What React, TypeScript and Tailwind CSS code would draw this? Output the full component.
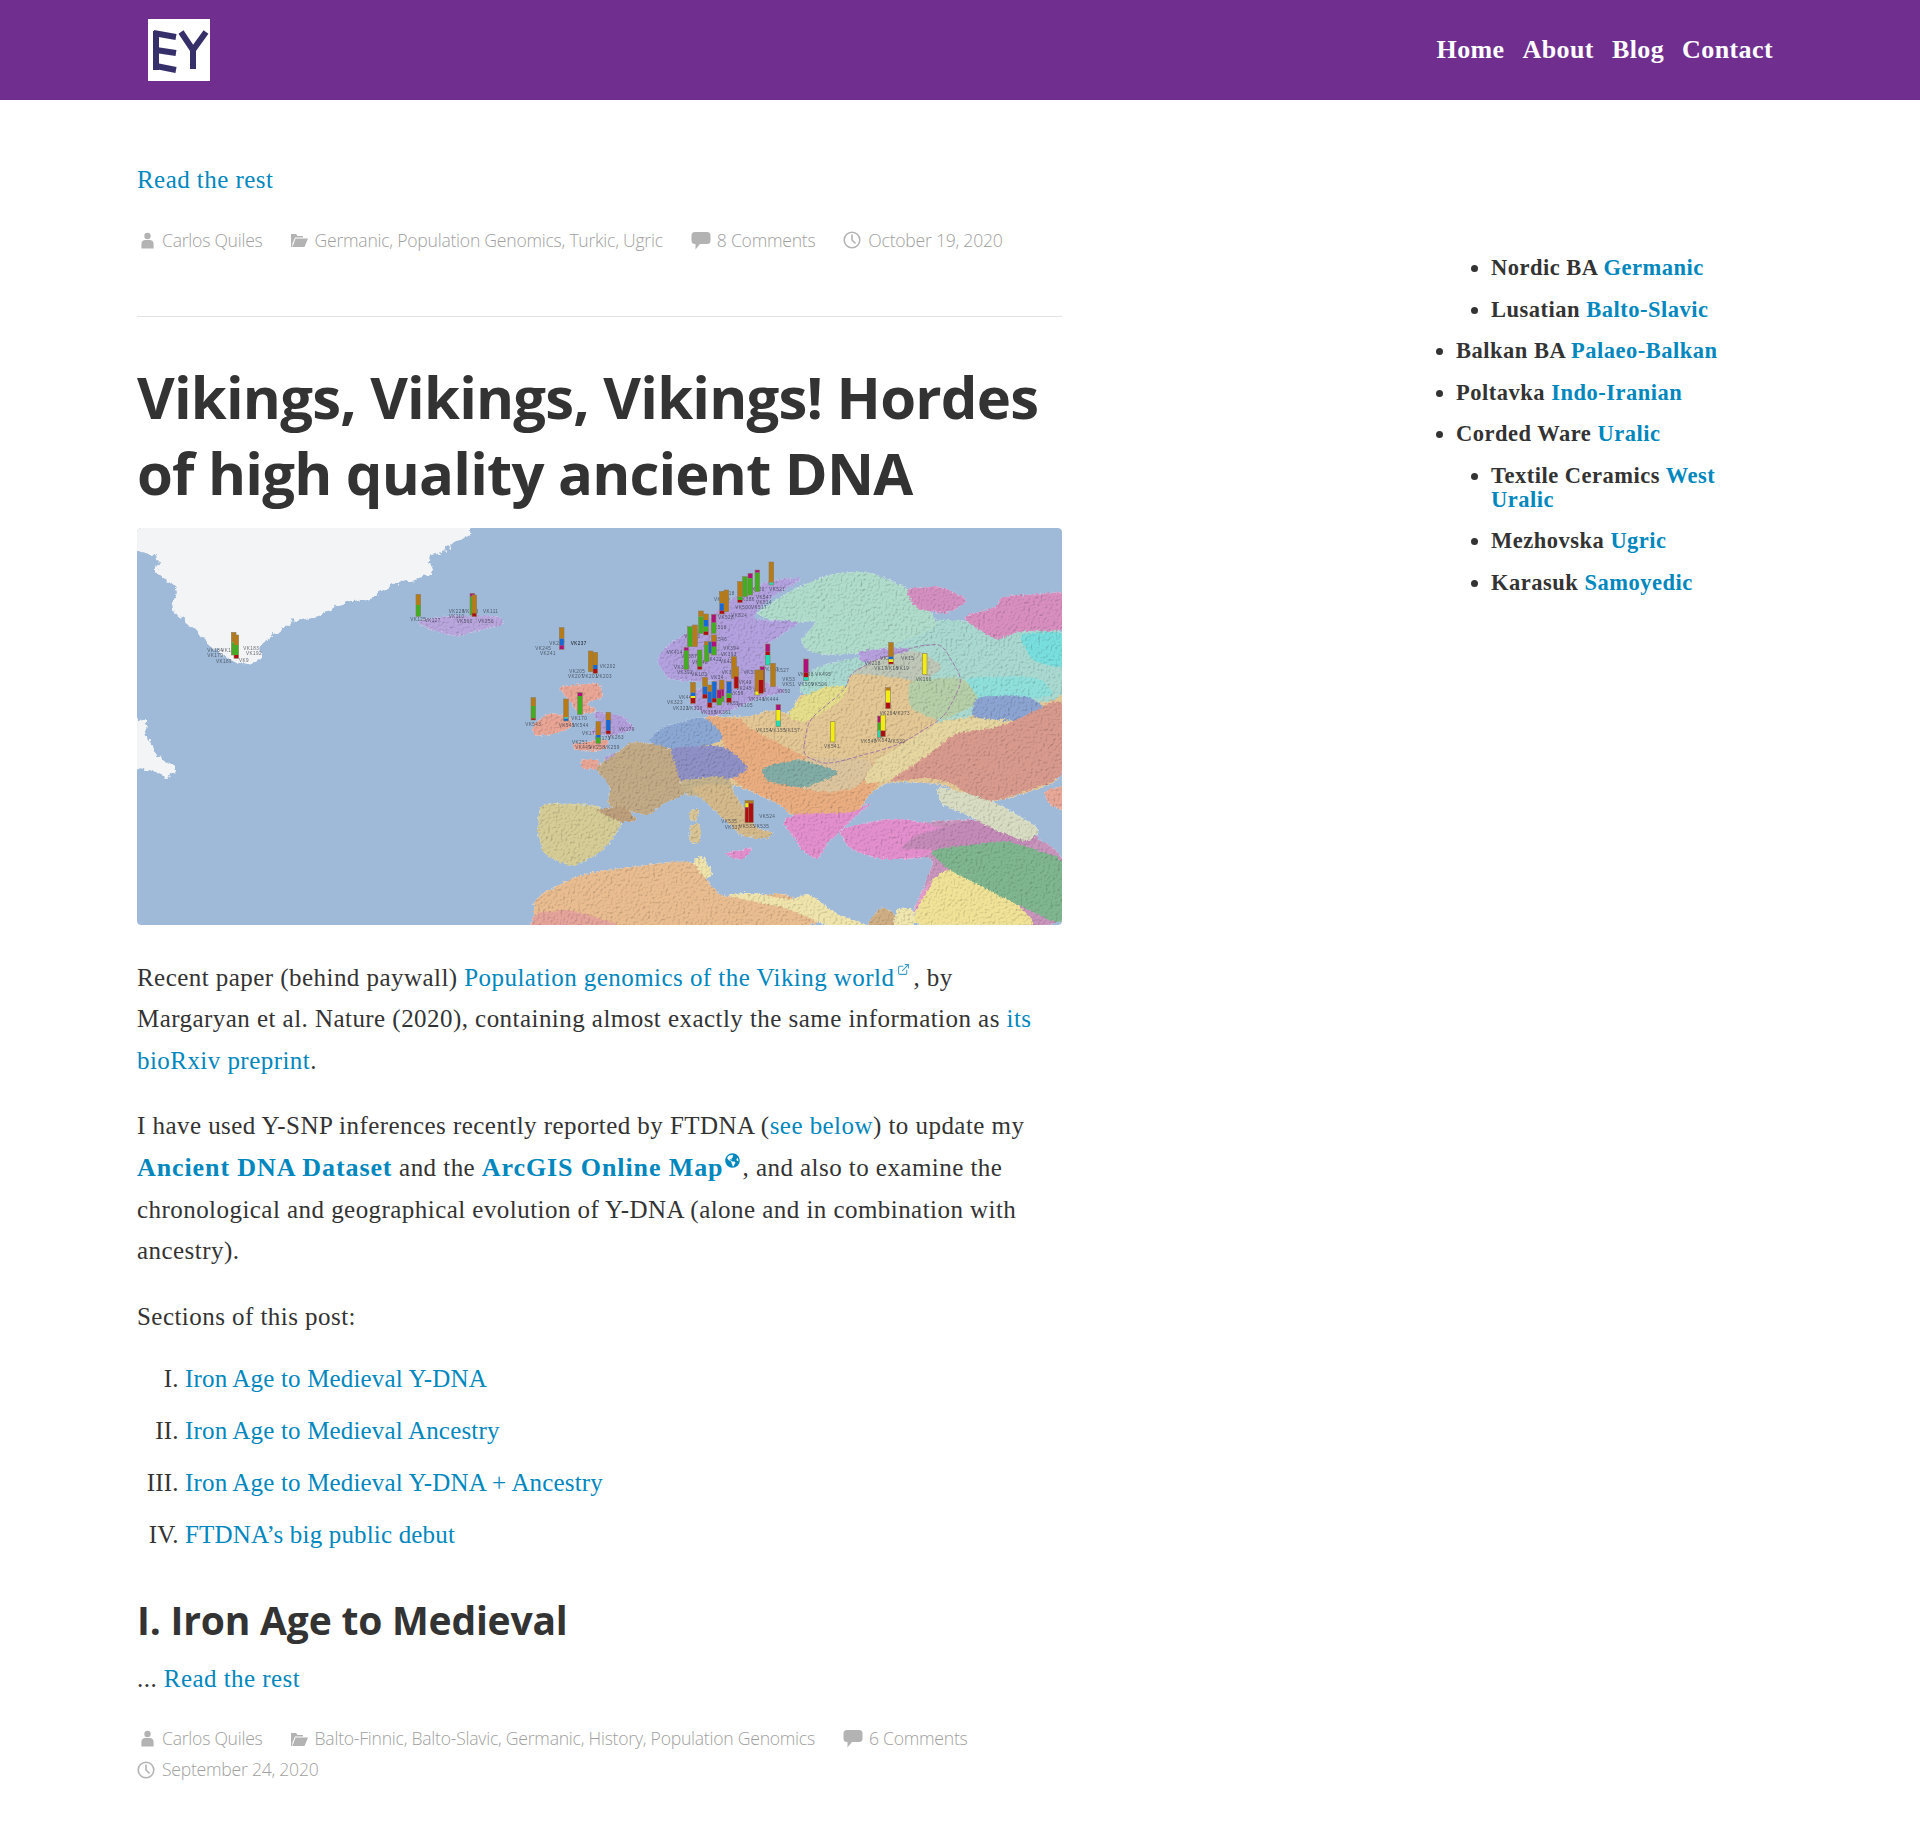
import { FaGlobeAmericas } from "react-icons/fa";
import { ExternalLink } from "lucide-react";
import type { ReactNode } from "react";

// map data: points are read off a 1526x1191 grid laid over the picture
const toPoints = (s: string): number[][] =>
  s.split(" ").map((q) => {
    const [x, y] = q.split(",").map(Number);
    return [(x - 12) / 1.65, (y - 24) / 3];
  });

// closed shape with its corners rounded off
const smooth = (s: string): string => {
  const p = toPoints(s);
  const lerp = (a: number[], b: number[], t: number) =>
    `${(a[0] + (b[0] - a[0]) * t).toFixed(1)} ${(a[1] + (b[1] - a[1]) * t).toFixed(1)}`;
  let d = "";
  p.forEach((c, i) => {
    const prev = p[(i + p.length - 1) % p.length];
    const next = p[(i + 1) % p.length];
    d += `${i === 0 ? "M" : "L"}${lerp(c, prev, 0.28)}Q${c[0].toFixed(1)} ${c[1].toFixed(1)} ${lerp(c, next, 0.28)}`;
  });
  return d + "Z";
};

const ice: string[] = [
  "-60,-60 560,-60 565,48 530,70 520,95 490,110 505,165 470,175 440,190 400,230 350,250 310,290 270,300 240,340 215,380 218,415 195,440 175,425 150,400 130,380 110,330 70,270 80,200 40,150 50,110 -60,60",
  "-40,585 30,598 25,650 45,700 75,745 65,778 30,748 -40,748",
  "520,308 565,298 595,308 560,328 525,328",
];

const regions: [string, string][] = [
  ["#b9a6dd", "470,305 520,288 612,288 618,312 575,332 540,350 500,332"],
  ["#e9a596", "662,620 690,578 725,588 732,620 700,642 668,648"],
  ["#e9a596", "705,500 775,488 782,530 752,552 772,574 740,584 725,540"],
  ["#e9a596", "730,672 792,656 785,692 732,690"],
  ["#e9a596", "742,720 772,716 778,748 748,748"],
  ["#b39fdc", "762,572 812,586 836,626 800,648 756,642 775,610"],
  ["#b39fdc", "782,708 832,688 832,728 788,736"],
  ["#e3c795", "945,590 1000,590 1100,590 1100,530 1180,470 1300,400 1545,330 1545,780 1440,840 1400,850 1340,790 1250,785 1215,830 1195,890 1100,895 1070,850 1000,795 960,790 905,790 850,670"],
  ["#c995bd", "1170,930 1420,890 1545,1000 1545,1225 1290,1225 1310,1100 1330,1010 1190,990"],
  ["#a9d9d0", "1100,520 1130,440 1230,400 1300,340 1320,300 1380,300 1420,350 1480,330 1545,330 1545,540 1420,560 1350,620 1200,560"],
  ["#b0dccb", "1030,285 1070,235 1100,205 1160,160 1220,155 1280,200 1310,240 1335,320 1280,360 1220,400 1130,405 1105,365 1125,325 1135,300 1085,310"],
  ["#d48fc0", "1278,205 1340,200 1385,240 1350,282 1298,268"],
  ["#d88fc0", "1370,292 1430,262 1440,228 1500,222 1545,215 1545,332 1470,332 1430,362"],
  ["#78dede", "1465,340 1545,335 1545,445 1490,425"],
  ["#8fe0dc", "1375,470 1500,470 1530,530 1400,545"],
  ["#b2a1de", "875,400 900,360 950,310 975,260 1010,215 1060,180 1115,172 1060,230 1035,270 1030,300 1108,303 1070,350 1050,375 1055,420 1045,470 1030,500 985,530 960,480 930,485 890,478 870,430"],
  ["#b2a1de", "922,520 960,490 1045,482 1088,515 1040,532 1000,565 960,592 928,560"],
  ["#b6a0de", "1200,392 1290,382 1272,432 1208,428"],
  ["#bfc7b8", "1185,465 1230,418 1300,388 1345,440 1295,505 1205,512"],
  ["#e9ad80", "945,585 1000,598 1090,588 1122,640 1110,710 1200,735 1295,705 1245,770 1218,830 1198,888 1100,895 1070,850 1000,795 985,710 980,660"],
  ["#e3c795", "1000,602 1060,568 1105,590 1110,530 1180,508 1190,458 1295,478 1345,590 1272,682 1150,738 1110,708"],
  ["#e5de8b", "1082,592 1108,530 1150,498 1188,498 1172,545 1115,608"],
  ["#b6cfa8", "1285,480 1375,470 1405,545 1340,605 1285,565"],
  ["#e6d6a0", "1228,722 1290,658 1340,598 1485,585 1412,630 1352,682 1292,762 1252,784 1208,792"],
  ["#8ca4d2", "1395,530 1482,525 1515,570 1482,604 1388,594"],
  ["#dcc59e", "1095,712 1232,716 1204,802 1150,820 1056,784"],
  ["#82aca6", "1042,742 1108,716 1176,760 1110,806 1048,782"],
  ["#d99a8e", "1250,785 1285,745 1325,695 1360,640 1440,620 1545,525 1545,772 1440,838 1400,848 1360,792 1320,772"],
  ["#e8a898", "1508,812 1545,796 1545,876 1515,850"],
  ["#8ba8d4", "876,622 950,586 985,660 910,694 852,668"],
  ["#8e90c6", "886,682 982,676 1024,748 982,784 902,786"],
  ["#c2aa86", "778,732 830,662 892,682 908,782 918,822 882,848 856,888 788,858 794,800 768,746"],
  ["#c4b38c", "908,778 982,768 998,800 986,842 914,824"],
  ["#d5cc96", "678,848 772,856 816,905 782,992 730,1044 682,1002 672,930"],
  ["#bd9f7c", "765,868 816,858 838,902 812,908"],
  ["#d4b98b", "925,800 985,790 1002,830 1032,925 1066,940 1046,958 1010,948 975,888 945,838"],
  ["#d9c494", "924,868 940,868 936,902 924,902"],
  ["#d9c494", "924,912 942,912 942,968 924,968"],
  ["#e38fce", "1076,905 1100,880 1190,880 1228,842 1188,905 1167,945 1152,965 1136,1018 1114,1002 1094,945"],
  ["#e38fce", "1168,930 1240,898 1290,898 1340,925 1420,898 1452,960 1330,988 1310,1014 1240,1018 1188,988"],
  ["#e38fce", "978,1002 1030,982 1012,1022"],
  ["#c48bb8", "1298,945 1400,892 1504,950 1482,978 1330,988 1268,988"],
  ["#d7dcc2", "1330,798 1380,818 1442,858 1504,930 1482,968 1430,932 1390,892 1338,852"],
  ["#f0e296", "1288,1225 1310,1100 1350,1042 1432,1098 1506,1225"],
  ["#7fb68f", "1318,990 1400,972 1450,962 1545,1018 1545,1225 1430,1122 1348,1046"],
  ["#e49cc8", "1282,1225 1310,1098 1328,1078 1302,1152"],
  ["#e9bd90", "666,1225 668,1130 750,1058 930,1018 960,1100 980,1132 1090,1118 1152,1225"],
  ["#efe4ab", "978,1125 1030,1118 1090,1142 1120,1118 1162,1180 1232,1225 1158,1225 1088,1166"],
  ["#efe4ab", "928,1022 945,1006 962,1060 950,1078"],
  ["#e4a39b", "660,1225 668,1178 730,1168 825,1225"],
  ["#cfae84", "1212,1225 1240,1158 1262,1180 1262,1225"],
  ["#f0e7ae", "1260,1225 1265,1168 1292,1163 1296,1225"],
];

const G = "#3fae1f";
const B = "#b87a14";
const L = "#1468d8";
const M = "#b0107a";
const R = "#b00d10";
const Y = "#f2ec10";
const C = "#1fdcb4";

type Bar = [number, number, [string, number][]];

// bars: x, top, segments [colour, height], in units of 1/3 px from the map's origin
const euroBars: Bar[] = [
  [634, 66, [[B, 62], [C, 7]]],
  [592, 90, [[M, 8], [G, 57]]],
  [571, 100, [[M, 15], [G, 50]]],
  [555, 110, [[G, 60]]],
  [540, 125, [[B, 45], [G, 10], [R, 8]]],
  [486, 155, [[B, 35], [L, 22], [R, 10]]],
  [499, 150, [[B, 65]]],
  [423, 213, [[B, 17], [G, 50]]],
  [438, 222, [[B, 18], [L, 20], [G, 15], [R, 10]]],
  [461, 223, [[M, 25], [G, 32]]],
  [390, 260, [[G, 60]]],
  [405, 255, [[B, 65]]],
  [379, 322, [[M, 10], [G, 56]]],
  [419, 330, [[G, 50], [R, 8]]],
  [440, 305, [[B, 10], [G, 50]]],
  [452, 305, [[L, 35]]],
  [462, 285, [[B, 20], [M, 15], [G, 25]]],
  [522, 350, [[B, 65]]],
  [529, 380, [[B, 30], [R, 35]]],
  [623, 312, [[M, 23], [R, 10], [C, 30]]],
  [607, 380, [[M, 12], [R, 63]]],
  [592, 390, [[B, 65], [Y, 10]]],
  [603, 390, [[B, 30], [R, 40]]],
  [639, 370, [[B, 70]]],
  [738, 357, [[M, 41], [R, 14], [C, 10]]],
  [993, 308, [[B, 42], [L, 8], [Y, 8], [R, 6]]],
  [1094, 340, [[Y, 64]]],
  [984, 443, [[B, 9], [Y, 36], [R, 18]]],
  [960, 528, [[M, 20], [G, 24], [C, 20]]],
  [969, 525, [[Y, 47], [R, 18]]],
  [818, 544, [[Y, 62]]],
  [655, 494, [[M, 16], [Y, 32], [C, 18]]],
  [399, 427, [[B, 31], [L, 10], [Y, 6], [R, 16]]],
  [435, 412, [[B, 28], [L, 23], [R, 12]]],
  [449, 435, [[B, 20], [L, 33], [R, 15]]],
  [463, 425, [[L, 50], [R, 12]]],
  [485, 420, [[B, 28], [M, 20], [G, 17]]],
  [507, 425, [[L, 35], [G, 14], [R, 14]]],
  [478, 450, [[M, 25], [G, 20]]],
  [92, 333, [[B, 62]]],
  [106, 337, [[B, 38], [L, 12], [R, 13]]],
  [60, 458, [[M, 10], [G, 55]]],
  [18, 477, [[B, 55], [C, 4], [L, 7]]],
  [5, 263, [[B, 33], [L, 20], [M, 12]]],
  [115, 545, [[B, 40], [L, 8], [G, 17]]],
  [145, 517, [[B, 23], [L, 32], [R, 10]]],
  [562, 782, [[B, 8], [Y, 12], [R, 46]]],
  [573, 782, [[B, 8], [R, 58]]],
];

const westBars: Bar[] = [
  [311, 322, [[B, 30], [G, 38]]],
  [319, 330, [[B, 30], [G, 30], [R, 10]]],
  [865, 208, [[B, 32], [G, 34]]],
  [1027, 205, [[M, 10], [G, 55]]],
  [1033, 210, [[B, 55], [R, 10]]],
  [1210, 518, [[B, 25], [G, 37], [R, 5]]],
];

const euroLabels: [number, number, string][] = [
  [652, 148, "VK521"], [590, 147, "VK520"], [612, 172, "VK547"], [612, 186, "VK514"], [560, 178, "VK386"],
  [550, 202, "VK500"], [597, 202, "VK517"], [538, 227, "VK524"], [498, 232, "VK528"], [486, 178, "VK419"],
  [500, 160, "VK418"], [476, 263, "VK518"], [397, 288, "VK423"], [478, 298, "VK546"], [344, 338, "VK414"],
  [388, 348, "VK387"], [514, 325, "VK394"], [506, 342, "VK393"], [504, 364, "VK420"], [462, 357, "VK422"],
  [420, 367, "VK448"], [366, 381, "VK390"], [375, 398, "VK392"], [418, 403, "VK103"], [472, 411, "VK34"],
  [505, 396, "VK32"], [570, 396, "VK30"], [632, 388, "VK517"], [664, 390, "VK527"], [686, 418, "VK53"],
  [686, 434, "VK51"], [737, 404, "VK508"], [790, 404, "VK495"], [738, 434, "VK509"], [778, 434, "VK506"],
  [938, 370, "VK218"], [980, 356, "VK20"], [1043, 355, "VK15"], [962, 386, "VK17"], [996, 386, "VK18"],
  [1028, 386, "VK19"], [1091, 418, "VK160"], [983, 520, "VK284"], [1026, 520, "VK273"], [612, 572, "VK154"],
  [654, 572, "VK155"], [697, 572, "VK157"], [816, 620, "VK541"], [926, 605, "VK540"], [968, 602, "VK542"],
  [1012, 605, "VK539"], [622, 830, "VK524"], [508, 844, "VK535"], [518, 861, "VK537"], [562, 860, "VK533"],
  [604, 860, "VK535"], [345, 487, "VK323"], [362, 505, "VK322"], [404, 505, "VK330"], [376, 472, "VK44"],
  [446, 516, "VK365"], [490, 516, "VK361"], [518, 490, "VK55"], [555, 497, "VK105"], [532, 460, "VK59"],
  [552, 444, "VK245"], [556, 426, "VK43"], [600, 452, "VK46"], [590, 478, "VK349"], [632, 478, "VK444"],
  [672, 454, "VK50"], [56, 310, "VK237"], [143, 380, "VK202"], [52, 394, "VK205"], [48, 410, "VK207"],
  [90, 410, "VK201"], [132, 410, "VK203"], [58, 535, "VK170"], [20, 555, "VK545"], [62, 555, "VK544"],
  [90, 580, "VK177"], [200, 567, "VK179"], [168, 593, "VK263"], [128, 595, "VK173"], [60, 607, "VK251"],
  [70, 622, "VK449"], [112, 622, "VK258"], [155, 622, "VK259"],
];

const westLabels: [number, number, string][] = [
  [256, 376, "VK184"], [298, 377, "VK187"], [364, 370, "VK183"], [372, 386, "VK192"], [256, 392, "VK179"],
  [282, 408, "VK189"], [342, 406, "VK9"], [865, 284, "VK125"], [908, 286, "VK127"], [980, 258, "VK228"],
  [1022, 258, "VK223"], [1082, 260, "VK111"], [980, 274, "VK110"], [1004, 288, "VK560"], [1068, 288, "VK256"],
  [1240, 369, "VK245"], [1282, 354, "VK247"], [1346, 355, "VK237"], [1254, 385, "VK241"], [1210, 597, "VK543"],
];

const Bars = ({ data, ox, oy }: { data: Bar[]; ox: number; oy: number }) => (
  <>
    {data.map(([x, top, segs], i) => {
      let y = top;
      return (
        <g key={i}>
          {segs.map(([color, h], j) => {
            const el = <rect key={j} x={ox + (x - 7) / 3} y={oy + y / 3} width={14 / 3} height={h / 3} fill={color} />;
            y += h;
            return el;
          })}
          <rect
            x={ox + (x - 7) / 3}
            y={oy + top / 3}
            width={14 / 3}
            height={(y - top) / 3}
            fill="none"
            stroke="#8a7f60"
            strokeWidth="0.6"
          />
        </g>
      );
    })}
  </>
);

const Labels = ({ data, ox, oy }: { data: [number, number, string][]; ox: number; oy: number }) => (
  <>
    {data.map(([x, y, t], i) => (
      <text
        key={i}
        x={ox + x / 3}
        y={oy + (y + 5) / 3}
        textAnchor="middle"
        fontSize="4.6"
        fontFamily="Liberation Sans, sans-serif"
        fill="#2f3540"
        opacity="0.75"
      >
        {t}
      </text>
    ))}
  </>
);

function VikingMap() {
  return (
    <svg viewBox="0 0 925 397" className="block h-[397px] w-full rounded-[4px]">
      <defs>
        <filter id="relief" x="-2%" y="-2%" width="104%" height="104%" colorInterpolationFilters="sRGB">
          <feTurbulence type="fractalNoise" baseFrequency="0.4" numOctaves="4" seed="4" result="n" />
          <feDisplacementMap in="SourceGraphic" in2="n" scale="5" xChannelSelector="R" yChannelSelector="G" result="d" />
          <feGaussianBlur in="d" stdDeviation="0.6" result="soft" />
          <feDiffuseLighting in="n" surfaceScale="0.8" diffuseConstant="1.08" lightingColor="#ffffff" result="l">
            <feDistantLight azimuth="225" elevation="68" />
          </feDiffuseLighting>
          <feComposite in="l" in2="soft" operator="in" result="lit" />
          <feBlend in="soft" in2="lit" mode="multiply" />
        </filter>
        <filter id="rough" x="-2%" y="-2%" width="104%" height="104%" colorInterpolationFilters="sRGB">
          <feTurbulence type="fractalNoise" baseFrequency="0.12" numOctaves="4" seed="9" result="n" />
          <feDisplacementMap in="SourceGraphic" in2="n" scale="10" xChannelSelector="R" yChannelSelector="G" />
          <feGaussianBlur stdDeviation="0.3" />
        </filter>
        <clipPath id="frame">
          <rect width="925" height="397" rx="4" />
        </clipPath>
      </defs>
      <g clipPath="url(#frame)">
        <rect width="925" height="397" fill="#9fbad8" />
        <g filter="url(#rough)" fill="#f3f4f5">
          {ice.map((pts, i) => (
            <path key={i} d={smooth(pts)} />
          ))}
        </g>
        <g filter="url(#relief)">
          {regions.map(([color, pts], i) => (
            <path key={i} d={smooth(pts)} fill={color} />
          ))}
        </g>
        <path
          d={smooth("1110,705 1150,735 1270,675 1345,590 1375,480 1340,372 1300,378 1230,420 1190,460 1180,510 1120,600")}
          fill="none"
          stroke="#a077a8"
          strokeWidth="1"
          strokeDasharray="4 2"
        />
        <Labels data={westLabels} ox={-7} oy={-3} />
        <Labels data={euroLabels} ox={423} oy={12} />
        <Bars data={westBars} ox={-7} oy={-3} />
        <Bars data={euroBars} ox={423} oy={12} />
      </g>
    </svg>
  );
}

const UserIcon = () => (
  <svg viewBox="0 0 16 18" className="mr-[7px] ml-[3px] h-[17px] w-[15px] shrink-0 fill-[#b3b3b3]">
    <circle cx="8" cy="4.2" r="3.4" />
    <path d="M1.500 17.500v-5c0-2.600 2-4 4-4h5c2 0 4 1.400 4 4v5z" />
  </svg>
);

const FolderIcon = () => (
  <svg viewBox="0 0 17 14" className="mr-[7px] h-[14px] w-[17px] shrink-0 fill-[#b3b3b3]">
    <path d="M0 1h5l1.500 2H12v1.500H4L1.300 11 1.300 14H0z" />
    <path d="M4.500 5.500H17L13.500 14H1.500z" />
  </svg>
);

const CommentIcon = () => (
  <svg viewBox="0 0 20 19" className="mr-[6px] h-[19px] w-[20px] shrink-0 fill-[#b3b3b3]">
    <path d="M4 1h12a3.500 3.500 0 0 1 3.500 3.500v5A3.500 3.500 0 0 1 16 13H9l-4.500 5.500V13H4A3.500 3.500 0 0 1 .5 9.500v-5A3.500 3.500 0 0 1 4 1z" />
  </svg>
);

const ClockIcon = () => (
  <svg viewBox="0 0 18 18" className="mr-[7px] h-[18px] w-[18px] shrink-0 fill-none stroke-[#b3b3b3] stroke-[1.600]">
    <circle cx="9" cy="9" r="7.800" />
    <path d="M9 3.500V9l3.500 3.500" />
  </svg>
);

const a = "text-[#0087be]";
const strong = "text-[26px] font-bold tracking-[0.9px] text-[#0087be]";

const PostMeta = ({ children }: { children: ReactNode }) => (
  <div className="flex flex-wrap items-center font-['Open_Sans',sans-serif] text-[17.600px] leading-[31px] font-light tracking-[-0.25px] text-[#a0a0a0]">
    {children}
  </div>
);

const MetaItem = ({ icon, text }: { icon: ReactNode; text: string }) => (
  <span className="mr-[28px] flex items-center">
    {icon}
    {text}
  </span>
);

export default function App() {
  return (
    <div className="min-h-[1845px] bg-white font-['Liberation_Serif',serif] tracking-[0.45px] text-[#333]">
      <header className="flex h-[100px] items-center justify-between bg-[#702f8f] pr-[147px] pl-[148px]">
        <div className="h-[62px] w-[62px] bg-white">
          <svg viewBox="0 0 62 62" className="h-full w-full" fill="none" stroke="#36306a" strokeWidth="6">
            <path d="M8 12v39" />
            <path d="M5.500 14L28 18M8 31l20 3M8 47l20 4" />
            <path d="M33 13l12 18v19M58 13L45 31" />
          </svg>
        </div>
        <nav className="flex gap-[18px] pb-[2px] text-[26px] font-bold tracking-[0.4px] text-white">
          <a>Home</a>
          <a>About</a>
          <a>Blog</a>
          <a>Contact</a>
        </nav>
      </header>

      <div className="flex">
        <main className="ml-[137px] w-[925px] text-[25px] leading-[41.600px]">
          <p className={`pt-[59px] ${a}`}>Read the rest</p>
          <div className="mt-[24px]">
            <PostMeta>
              <MetaItem icon={<UserIcon />} text="Carlos Quiles" />
              <MetaItem icon={<FolderIcon />} text="Germanic, Population Genomics, Turkic, Ugric" />
              <MetaItem icon={<CommentIcon />} text="8 Comments" />
              <MetaItem icon={<ClockIcon />} text="October 19, 2020" />
            </PostMeta>
          </div>
          <hr className="mt-[60px] border-t border-[#e2e2e2]" />
          <h1 className="mt-[42px] font-['Open_Sans',sans-serif] text-[58px] leading-[76px] font-bold tracking-[-0.8px] text-[#333]">
            Vikings, Vikings, Vikings! Hordes of high quality ancient DNA
          </h1>
          <div className="mt-[17px]">
            <VikingMap />
          </div>

          <p className="mt-[32px]">
            Recent paper (behind paywall) <a className={a}>Population genomics of the Viking world</a>
            <ExternalLink className="relative -top-[10px] mx-[3px] inline h-[13px] w-[13px] text-[#3a9ccb]" />, by
            Margaryan et al. Nature (2020), containing almost exactly the same information as{" "}
            <a className={a}>its bioRxiv preprint</a>.
          </p>
          <p className="mt-[24px]">
            I have used Y-SNP inferences recently reported by FTDNA (<a className={a}>see below</a>) to update my{" "}
            <a className={strong}>Ancient DNA Dataset</a> and the <a className={strong}>ArcGIS Online Map</a>
            <FaGlobeAmericas className="relative -top-[10px] mx-[2px] inline h-[15px] w-[15px] text-[#0087be]" />, and
            also to examine the chronological and geographical evolution of Y-DNA (alone and in combination with
            ancestry).
          </p>
          <p className="mt-[24px]">Sections of this post:</p>

          <ol className="mt-[21px] list-[upper-roman] pl-[48px] tracking-[0.17px]">
            <li className="mb-[10.400px]">
              <a className={a}>Iron Age to Medieval Y-DNA</a>
            </li>
            <li className="mb-[10.400px]">
              <a className={a}>Iron Age to Medieval Ancestry</a>
            </li>
            <li className="mb-[10.400px]">
              <a className={a}>Iron Age to Medieval Y-DNA + Ancestry</a>
            </li>
            <li>
              <a className={a}>FTDNA’s big public debut</a>
            </li>
          </ol>

          <h2 className="mt-[38px] font-['Open_Sans',sans-serif] text-[39px] leading-[52px] font-bold tracking-[-0.2px] text-[#333]">
            I. Iron Age to Medieval
          </h2>
          <p className="mt-[12px]">
            ... <a className={a}>Read the rest</a>
          </p>
          <div className="mt-[24px]">
            <PostMeta>
              <MetaItem icon={<UserIcon />} text="Carlos Quiles" />
              <MetaItem icon={<FolderIcon />} text="Balto-Finnic, Balto-Slavic, Germanic, History, Population Genomics" />
              <MetaItem icon={<CommentIcon />} text="6 Comments" />
              <MetaItem icon={<ClockIcon />} text="September 24, 2020" />
            </PostMeta>
          </div>
        </main>

        <aside className="ml-[359px] w-[310px] pt-[156px] text-[22.500px] leading-[24px] font-bold tracking-[0.5px]">
          <ul className="list-disc pl-[35px] marker:text-[#333]">
            <ul className="list-disc pl-[35px]">
              <li className="mb-[17.500px]">
                Nordic BA <a className={a}>Germanic</a>
              </li>
              <li className="mb-[17.500px]">
                Lusatian <a className={a}>Balto-Slavic</a>
              </li>
            </ul>
            <li className="mb-[17.500px]">
              Balkan BA <a className={a}>Palaeo-Balkan</a>
            </li>
            <li className="mb-[17.500px]">
              Poltavka <a className={a}>Indo-Iranian</a>
            </li>
            <li className="mb-[17.500px]">
              Corded Ware <a className={a}>Uralic</a>
            </li>
            <ul className="list-disc pl-[35px]">
              <li className="mb-[17.500px]">
                Textile Ceramics <a className={a}>West Uralic</a>
              </li>
              <li className="mb-[17.500px]">
                Mezhovska <a className={a}>Ugric</a>
              </li>
              <li className="mb-[17.500px]">
                Karasuk <a className={a}>Samoyedic</a>
              </li>
            </ul>
          </ul>
        </aside>
      </div>
    </div>
  );
}
